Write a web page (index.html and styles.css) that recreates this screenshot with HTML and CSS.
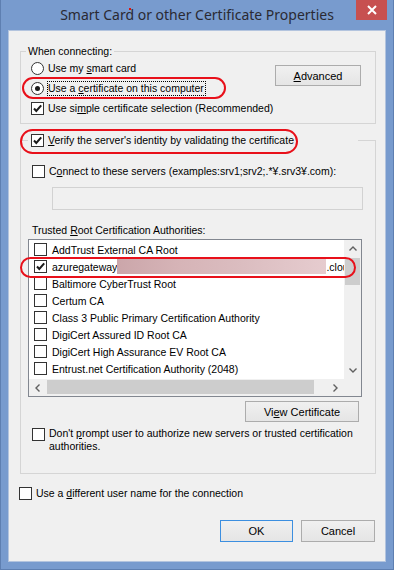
FILE: index.html
```html
<!DOCTYPE html>
<html lang="en">
<head>
    <meta charset="UTF-8">
    <title>Smart Card or other Certificate Properties</title>
    <link rel="stylesheet" href="styles.css">
</head>
<body>
<div class="window">
    <div class="titlebar">
        <span></span>
        <span class="title">Smart Card or other Certificate Properties</span>
        <button class="close" title="Close">
            <svg width="10" height="10" viewBox="0 0 10 10"><path d="M1 1L9 9M9 1L1 9" stroke="#fff" stroke-width="2"/></svg>
        </button>
        <i class="speck"></i>
    </div>

    <div class="client">
        <div class="group connect">
            <div class="group-label">When connecting:</div>
            <div class="connect-body">
                <div class="options">
                    <div class="row"><span class="radio"></span><span class="text">Use my <u>s</u>mart card</span></div>
                    <div class="row"><span class="radio on"></span><span class="text focus">Use a <u>c</u>ertificate on this computer</span><i class="mark mark-cert"></i></div>
                    <div class="row"><span class="check"><svg width="11" height="11" viewBox="0 0 11 11"><path d="M2 5.5L4.3 8L9.2 2.3" fill="none" stroke="#1a1a1a" stroke-width="2"/></svg></span><span class="text">Use si<u>m</u>ple certificate selection (Recommended)</span></div>
                </div>
                <button class="btn advanced"><u>A</u>dvanced</button>
            </div>
        </div>

        <div class="group verify">
            <div class="group-label verify-label">
                <span class="check"><svg width="11" height="11" viewBox="0 0 11 11"><path d="M2 5.5L4.3 8L9.2 2.3" fill="none" stroke="#1a1a1a" stroke-width="2"/></svg></span>
                <span class="text"><u>V</u>erify the server's identity by validating the certificate</span>
                <i class="mark mark-verify"></i>
            </div>

            <div class="row servers"><span class="check"></span><span class="text">C<u>o</u>nnect to these servers (examples:srv1;srv2;.*¥.srv3¥.com):</span></div>
            <div class="server-input"></div>

            <div class="list-label">Trusted <u>R</u>oot Certification Authorities:</div>
            <div class="listbox">
                <div class="items">
                    <div class="item"><span class="check"></span>AddTrust External CA Root</div>
                    <div class="item"><span class="check"><svg width="11" height="11" viewBox="0 0 11 11"><path d="M2 5.5L4.3 8L9.2 2.3" fill="none" stroke="#1a1a1a" stroke-width="2"/></svg></span>azuregateway<span class="blur"></span><span class="tail">.clou</span></div>
                    <div class="item"><span class="check"></span>Baltimore CyberTrust Root</div>
                    <div class="item"><span class="check"></span>Certum CA</div>
                    <div class="item"><span class="check"></span>Class 3 Public Primary Certification Authority</div>
                    <div class="item"><span class="check"></span>DigiCert Assured ID Root CA</div>
                    <div class="item"><span class="check"></span>DigiCert High Assurance EV Root CA</div>
                    <div class="item"><span class="check"></span>Entrust.net Certification Authority (2048)</div>
                </div>
                <div class="vscroll">
                    <span class="arrow"><svg width="8" height="5" viewBox="0 0 8 5"><path d="M0.5 4.5L4 1L7.5 4.5" fill="none" stroke="#606060" stroke-width="1.4"/></svg></span>
                    <span class="vthumb"></span>
                    <span class="arrow end"><svg width="8" height="5" viewBox="0 0 8 5"><path d="M0.5 0.5L4 4L7.5 0.5" fill="none" stroke="#606060" stroke-width="1.4"/></svg></span>
                </div>
                <div class="hscroll">
                    <span class="arrow"><svg width="5" height="8" viewBox="0 0 5 8"><path d="M4.5 0.5L1 4L4.5 7.5" fill="none" stroke="#606060" stroke-width="1.4"/></svg></span>
                    <span class="hthumb"></span>
                    <span class="arrow end"><svg width="5" height="8" viewBox="0 0 5 8"><path d="M0.5 0.5L4 4L0.5 7.5" fill="none" stroke="#606060" stroke-width="1.4"/></svg></span>
                </div>
                <div class="corner"></div>
                <i class="mark mark-azure"></i>
            </div>

            <button class="btn view">Vi<u>e</u>w Certificate</button>

            <div class="row prompt"><span class="check"></span><span class="text">Don't <u>p</u>rompt user to authorize new servers or trusted certification<br>authorities.</span></div>
        </div>

        <div class="row other"><span class="check"></span><span class="text">Use a <u>d</u>ifferent user name for the connection</span></div>

        <div class="actions">
            <button class="btn ok">OK</button>
            <button class="btn">Cancel</button>
        </div>
    </div>
</div>
</body>
</html>
```

FILE: styles.css
```css
body{
    margin: 0;
    font-family: "Liberation Sans", Arial, sans-serif;
    font-size: 10.5px;
    color: #000;
}
u{ text-decoration-thickness: 1px; text-underline-offset: 1px; }

.window{
    width: 394px;
    height: 570px;
    box-sizing: border-box;
    background: #789bce;
    border: 1px solid #5e7fb1;
    border-top: 0;
    padding: 0 7px 7px;
    display: flex;
    flex-direction: column;
}
.titlebar{
    height: 30px;
    display: grid;
    grid-template-columns: 1fr auto 1fr;
    position: relative;
}
.title{
    font-family: "Noto Sans", "Open Sans", sans-serif;
    font-size: 14px;
    color: #2a2a33;
    line-height: 30px;
    white-space: nowrap;
}
.close{
    justify-self: end;
    align-self: start;
    width: 31px;
    height: 20px;
    margin-right: -1px;
    border: none;
    padding: 0;
    background: #c75050;
    display: flex;
    align-items: center;
    justify-content: center;
}
.speck{
    position: absolute;
    left: 121px;
    top: 8px;
    width: 2px;
    height: 2px;
    background: #e01010;
}

.client{
    flex: 1;
    background: #f0f0f0;
    border: 1px solid #b3c4de;
    display: flex;
    flex-direction: column;
}

/* group boxes */
.group{
    border: 1px solid #d5d5d5;
    margin: 0 9px 0 11px;
    display: flex;
    flex-direction: column;
}
.group-label{
    align-self: flex-start;
    background: #f0f0f0;
    line-height: 13px;
    margin: -7px 0 0 5px;
    padding: 0 2px;
}
.connect{ margin-top: 20px; padding-bottom: 5px; }
.connect-body{ display: flex; justify-content: space-between; }
.advanced{ width: 86px; height: 21px; margin: 7px 14px 0 0; }

.row{
    height: 20px;
    display: flex;
    align-items: center;
    position: relative;
    white-space: nowrap;
}
.options .row{ padding-left: 10px; }
.text{ line-height: 13px; margin-left: 4px; }
.focus{ border: 1px dotted #000; margin-left: 3px; padding-right: 1px; }

.radio, .check{
    width: 13px;
    height: 13px;
    box-sizing: border-box;
    border: 1px solid #333;
    background: #fff;
    flex: none;
    display: flex;
    align-items: center;
    justify-content: center;
}
.radio{ border-radius: 50%; }
.radio.on::after{
    content: "";
    width: 5px;
    height: 5px;
    border-radius: 50%;
    background: #1a1a1a;
}

.mark{
    position: absolute;
    box-sizing: border-box;
    border: 2px solid #e8101a;
    border-radius: 12px;
    pointer-events: none;
}
.mark-cert{ left: 1px; top: -1px; width: 204px; height: 22px; }

.verify{ margin-top: 16px; padding-bottom: 20px; }
.verify-label{
    margin: -8px 0 0 7px;
    padding: 0 0 0 3px;
    width: 327px;
    height: 14px;
    display: flex;
    align-items: center;
    position: relative;
    white-space: nowrap;
}
.mark-verify{ left: -8px; top: -4px; width: 278px; height: 25px; border-radius: 13px; }

.servers{ margin-top: 14px; padding-left: 11px; }
.server-input{
    margin: 6px 0 0 31px;
    width: 311px;
    height: 23px;
    box-sizing: border-box;
    border: 1px solid #d2d2d2;
    background: #f0f0f0;
}
.list-label{ margin: 14px 0 0 11px; line-height: 13px; }

.listbox{
    position: relative;
    margin: 2px 0 0 7px;
    width: 334px;
    height: 158px;
    box-sizing: border-box;
    border: 1px solid #828790;
    background: #fff;
    display: grid;
    grid-template-columns: minmax(0, 1fr) 17px;
    grid-template-rows: minmax(0, 1fr) 17px;
}
.items{ overflow: hidden; padding-top: 1px; }
.item{
    height: 17px;
    display: flex;
    align-items: center;
    gap: 5px;
    padding-left: 5px;
    white-space: nowrap;
}
.blur{
    flex: none;
    width: 209px;
    height: 15px;
    margin: 0 -5px;
    background: linear-gradient(90deg, #cba6aa, #d6b4b7 30%, #dbbdc0 60%, #e6cccf);
}
.tail{ flex: none; }
.vscroll, .hscroll{
    background: #f0f0f0;
    display: flex;
}
.vscroll{ flex-direction: column; }
.arrow{
    flex: none;
    width: 17px;
    height: 17px;
    display: flex;
    align-items: center;
    justify-content: center;
}
.end{ margin-top: auto; margin-left: auto; }
.hscroll .end{ margin-top: 0; }
.vscroll .end{ margin-left: 0; }
.vthumb{ height: 27px; margin: 1px 1px 0; background: #cdcdcd; }
.hthumb{ width: 267px; margin: 1px 0 2px 1px; background: #cdcdcd; }
.corner{ background: #f0f0f0; }
.mark-azure{ left: -9px; top: 17px; width: 336px; height: 21px; }

.btn{
    font: inherit;
    font-size: 11px;
    color: #000;
    padding: 0;
    background: linear-gradient(#f0f0f0, #e5e5e5);
    border: 1px solid #acacac;
}
.view{ align-self: flex-end; width: 114px; height: 21px; margin: 4px 16px 0 0; }

.prompt{ margin-top: 5px; padding-left: 11px; height: auto; align-items: flex-start; }
.prompt .check{ margin-top: 1px; }

.other{ margin-top: 9px; padding-left: 10px; }

.actions{
    margin-top: 17px;
    padding-right: 10px;
    display: flex;
    justify-content: flex-end;
    gap: 8px;
}
.actions .btn{ width: 74px; height: 22px; }
.actions .ok{ width: 73px; border-color: #3c8fe0; }
```
